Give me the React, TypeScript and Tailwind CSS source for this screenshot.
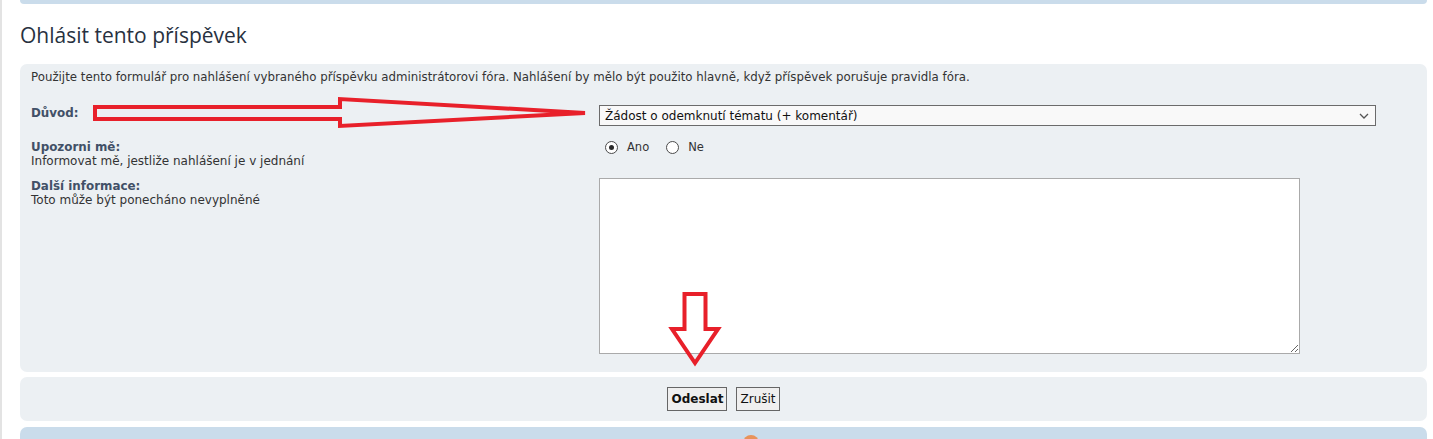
import React from "react";

const body = { fontFamily: '"DejaVu Sans", Verdana, sans-serif' };

function Radio({ checked, label }: { checked?: boolean; label: string }) {
  return (
    <label className="flex items-center gap-[9px]">
      <span className="flex h-[13px] w-[13px] items-center justify-center rounded-full border border-[#4b4b4b] bg-white">
        {checked && <span className="h-[5px] w-[5px] rounded-full bg-[#2a2a2a]" />}
      </span>
      <span className="text-[11.5px] leading-[14px] text-[#333]">{label}</span>
    </label>
  );
}

export default function App() {
  return (
    <div className="relative min-h-[439px] w-[1433px] overflow-hidden border-l-[2px] border-[#e3e3e3] bg-white pl-[18px] pr-[6px]" style={body}>
      <div className="h-[4px] rounded-b-[6px] bg-[#cadceb]" />
      <h2
        className="mt-[17px] h-[43px] text-[21px] font-normal leading-[28px] text-[#28313f]"
        style={{ fontFamily: '"Open Sans", "Trebuchet MS", sans-serif' }}
      >
        Ohlásit tento příspěvek
      </h2>

      <div className="relative rounded-[7px] bg-[#ecf0f3] pl-[11px] pr-[10px] pt-[6px] pb-[18px]">
        <p className="text-[11.8px] leading-[14px] text-[#333]">
          Použijte tento formulář pro nahlášení vybraného příspěvku administrátorovi fóra. Nahlášení by mělo být použito hlavně, když příspěvek porušuje pravidla fóra.
        </p>

        <div className="mt-[21px] flex">
          <div className="w-[568px] pt-[1px] text-[11.9px] font-bold leading-[14px] text-[#425067]">Důvod:</div>
          <div className="flex h-[21px] w-[777px] items-center justify-between border border-[#6b6b6b] bg-[#f9f9f9] pl-[5px] pr-[6px]">
            <span className="text-[12px] leading-[14px] text-[#111]">Žádost o odemknutí tématu (+ komentář)</span>
            <svg width="10" height="6" viewBox="0 0 10 6" fill="none">
              <path d="M1 1l4 4 4-4" stroke="#555" strokeWidth="1.3" />
            </svg>
          </div>
        </div>

        <div className="mt-[14px] flex">
          <div className="w-[568px]">
            <div className="text-[11.9px] font-bold leading-[14px] text-[#425067]">Upozorni mě:</div>
            <div className="text-[12px] leading-[14px] text-[#333]">Informovat mě, jestliže nahlášení je v jednání</div>
          </div>
          <div className="flex items-start gap-[17px] pl-[6px]">
            <Radio checked label="Ano" />
            <Radio label="Ne" />
          </div>
        </div>

        <div className="mt-[10px] flex">
          <div className="w-[568px] pt-[1px]">
            <div className="text-[11.9px] font-bold leading-[14px] text-[#425067]">Další informace:</div>
            <div className="text-[12px] leading-[14px] text-[#333]">Toto může být ponecháno nevyplněné</div>
          </div>
          <textarea className="block h-[176px] w-[701px] border border-[#aaaaaa] bg-white" />
        </div>

        <svg className="pointer-events-none absolute left-0 top-0" width="1407" height="310" viewBox="0 0 1407 310" fill="none">
          <path
            d="M75 43 L320 43 L320 35 L565 49 L320 62 L320 55 L75 55 Z"
            stroke="#e8202a"
            strokeWidth="4"
            strokeLinejoin="miter"
          />
        </svg>
        <svg className="pointer-events-none absolute left-0 top-0" width="1407" height="320" viewBox="0 0 1407 320" fill="none" style={{ overflow: "visible" }}>
          <path
            d="M664.5 230 L685.5 230 L685.5 265 L698 265 L675 299 L652 265 L664.5 265 Z"
            stroke="#e8202a"
            strokeWidth="4"
            strokeLinejoin="miter"
          />
        </svg>
      </div>

      <div className="mt-[5px] flex h-[44px] items-center justify-center gap-[9px] rounded-[7px] bg-[#ecf0f3]">
        <button className="h-[24px] border border-[#666] bg-[#efefef] px-[3px] text-[12px] font-bold text-[#111]">Odeslat</button>
        <button className="h-[24px] border border-[#666] bg-[#efefef] px-[3px] text-[12px] text-[#111]">Zrušit</button>
      </div>

      <div className="mt-[6px] h-[30px] rounded-t-[7px] bg-[#cadceb] pl-[723px] pt-[8px]">
        <div className="h-[16px] w-[16px] rounded-full bg-[#e8925a]" />
      </div>
    </div>
  );
}
